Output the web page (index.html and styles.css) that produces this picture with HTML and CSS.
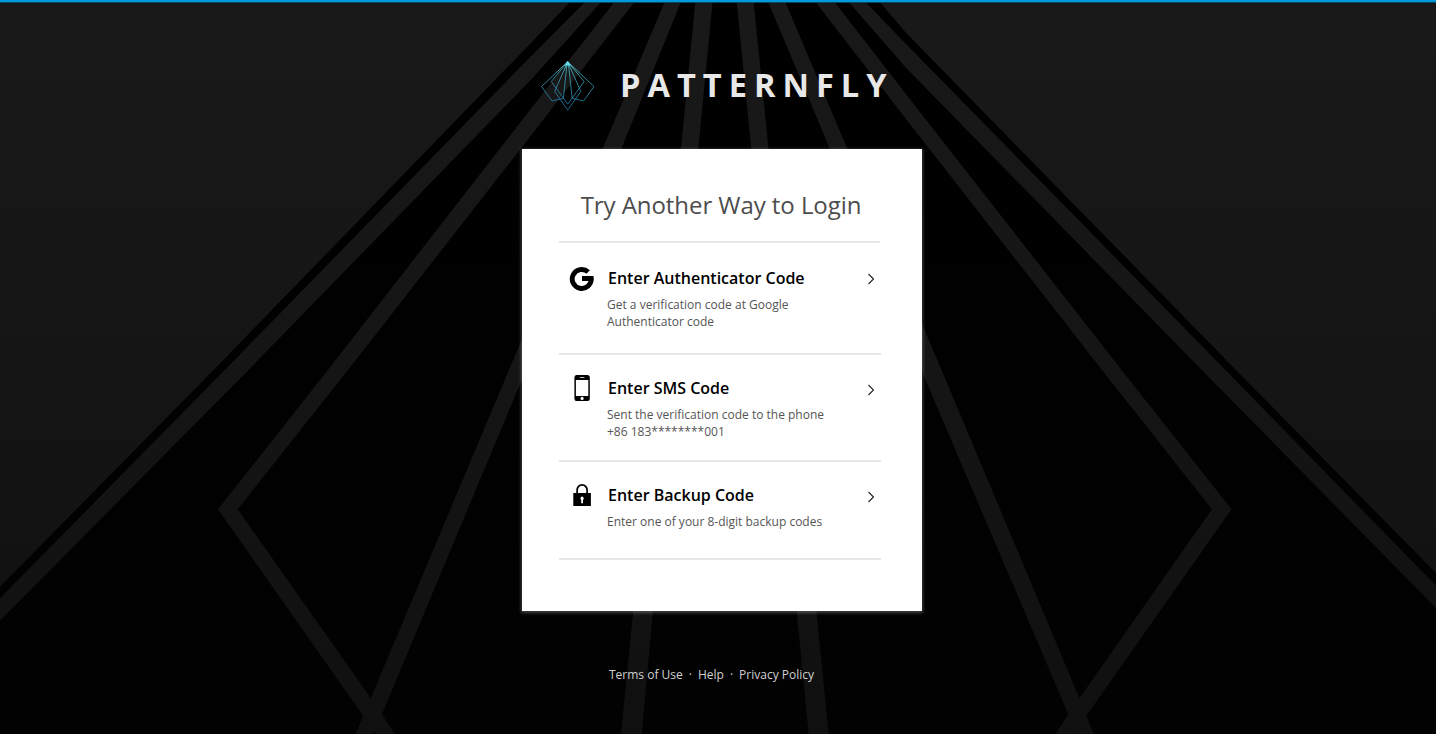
FILE: index.html
```html
<!DOCTYPE html>
<html lang="en">
<head>
<meta charset="utf-8">
<title>PatternFly Login</title>
<link rel="stylesheet" href="styles.css">
</head>
<body>
<svg class="backdrop" viewBox="0 0 1436 734" preserveAspectRatio="none" aria-hidden="true">
  <defs>
    <linearGradient id="shade" gradientUnits="userSpaceOnUse" x1="0" y1="0" x2="0" y2="734">
      <stop offset="0" stop-color="#191919"/>
      <stop offset=".5" stop-color="#151515"/>
      <stop offset="1" stop-color="#101010"/>
    </linearGradient>
    <linearGradient id="dark" gradientUnits="userSpaceOnUse" x1="0" y1="0" x2="0" y2="734">
      <stop offset="0" stop-color="#000"/>
      <stop offset="1" stop-color="#020202"/>
    </linearGradient>
  </defs>
  <rect width="1436" height="734" fill="url(#shade)"/>
  <path fill="url(#dark)" d="M572 0 530 44 213.6 370 0 586.7V734H1436V573L1236 370 906 32.7 878 0Z"/>
  <g fill="url(#shade)">
    <path d="M587 0 530 57.3 224.8 370 0 598.3V620.7L248.4 370 530 80.7 603 0Z"/>
    <path d="M616 0 530 110 327.9 370 218 509.3 362.7 715 376 734H395L370.8 698.3 237.6 509.3 348 370 530 136.7 636 0Z"/>
    <path d="M665.5 0 602.6 149 511.5 364 370.8 698.3 355.6 734H373.5L382 714 520 384 621.2 149 681.7 0Z"/>
    <path d="M695.5 0 681 149 633.3 611 621 734H641.7L653 611 698.3 149 712.7 0Z"/>
    <path d="M736.5 0 751.3 149 796.7 611 808.7 734H828.7L816.3 611 768.5 149 753.4 0Z"/>
    <path d="M767.3 0 830 149 923 374 1068.3 714 1076 734H1093.6L1079.4 698.3 939 364 847.4 149 784.5 0Z"/>
    <path d="M814 0 906 119 1102 370 1212 509.3 1079.4 698.3 1055.4 734H1075L1087.5 714 1231.5 509.3 1121.6 370 906 94.3 833 0Z"/>
    <path d="M847 0 906 67.7 1201.8 370 1436 608V585.7L1225.4 370 906 44 863.5 0Z"/>
  </g>
</svg>
<div class="page">
  <div class="topbar"></div>
  <header class="brand">
    <svg class="brand-mark" width="56" height="52" viewBox="540 60 56 52" aria-hidden="true">
      <defs>
        <linearGradient id="mark" gradientUnits="userSpaceOnUse" x1="0" y1="61" x2="0" y2="110">
          <stop offset="0" stop-color="#55c4d2"/>
          <stop offset=".4" stop-color="#388fa4"/>
          <stop offset="1" stop-color="#176a98"/>
        </linearGradient>
      </defs>
      <g class="mark-lines" stroke="url(#mark)">
        <path d="M567.7 61.8 541.5 86.5 552 101 563.4 98.3 567.2 61.8M567.7 61.8 594 86.5 583.6 101 572.2 98.3 568.2 61.8"/>
        <path d="M567.7 61.8 551.3 81.5 567.7 104.2 584.2 81.5Z"/>
        <path d="M567.7 61.8 554.7 91.5 567.7 110 580.8 91.5Z"/>
      </g>
      <path fill="#62dbe6" d="M567.7 61 571 65.5H564.4Z"/>
    </svg>
    <span class="brand-name">PATTERNFLY</span>
  </header>
  <main class="card">
    <h1 class="card-title">Try Another Way to Login</h1>
    <ul class="options">
      <li class="option option-auth">
        <svg class="option-icon" width="26" height="26" viewBox="0 0 26 26" aria-hidden="true">
          <path fill="none" stroke="#000" stroke-width="4.9" d="M19.2 6A9.5 9.5 0 1 0 22.2 12.3"/>
          <path d="M13 10.1H24.5Q24.9 12.6 24.1 15H13Z"/>
        </svg>
        <div class="option-body">
          <h2 class="option-title">Enter Authenticator Code</h2>
          <p class="option-text">Get a verification code at Google<br>Authenticator code</p>
        </div>
        <svg class="chevron" width="8" height="12" viewBox="0 0 8 12" aria-hidden="true"><path d="M1.5 1 6.5 6 1.5 11"/></svg>
      </li>
      <li class="option option-sms">
        <svg class="option-icon" width="26" height="26" viewBox="0 0 26 26" aria-hidden="true">
          <path fill-rule="evenodd" d="M7.5 0H18.3Q20.8 0 20.8 2.5V23.5Q20.8 26 18.3 26H7.5Q5.4 26 5.4 23.5V2.5Q5.4 0 7.5 0ZM6.9 5V21H19.3V5ZM10.8 1.9V2.7H15.4V1.9ZM13.1 21.8A1.6 1.6 0 1 0 13.1 25 1.6 1.6 0 1 0 13.1 21.8Z"/>
        </svg>
        <div class="option-body">
          <h2 class="option-title">Enter SMS Code</h2>
          <p class="option-text">Sent the verification code to the phone<br>+86 183********001</p>
        </div>
        <svg class="chevron" width="8" height="12" viewBox="0 0 8 12" aria-hidden="true"><path d="M1.5 1 6.5 6 1.5 11"/></svg>
      </li>
      <li class="option option-backup">
        <svg class="option-icon" width="26" height="26" viewBox="0 0 26 26" aria-hidden="true">
          <path fill="none" stroke="#000" stroke-width="1.7" d="M8.1 12V7.2A5 5.4 0 0 1 18.1 7.2V12"/>
          <path fill-rule="evenodd" d="M4.3 10H21.9V22.9H4.3ZM13.1 13.6A1.9 1.9 0 0 0 12.2 17V20.2H14V17A1.9 1.9 0 0 0 13.1 13.6Z"/>
        </svg>
        <div class="option-body">
          <h2 class="option-title">Enter Backup Code</h2>
          <p class="option-text">Enter one of your 8-digit backup codes</p>
        </div>
        <svg class="chevron" width="8" height="12" viewBox="0 0 8 12" aria-hidden="true"><path d="M1.5 1 6.5 6 1.5 11"/></svg>
      </li>
    </ul>
  </main>
  <footer class="links"><span>Terms of Use</span><span class="dot">·</span><span>Help</span><span class="dot">·</span><span>Privacy Policy</span></footer>
</div>
</body>
</html>
```
FILE: styles.css
```css
* { box-sizing: border-box; }
body {
  margin: 0;
  background: #000;
  font-family: "Open Sans", "Noto Sans", sans-serif;
}
.backdrop {
  position: absolute;
  inset: 0;
  width: 100%;
  height: 100%;
}
.page {
  position: relative;
  height: 734px;
  overflow: hidden;
}
.topbar {
  height: 3px;
  background: #0099dc;
  border-bottom: 1px solid #0b4661;
}
.brand {
  display: flex;
  align-items: flex-start;
  height: 52px;
  margin: 57px 0 0 540px;
}
.brand-mark { flex: none; }
.brand-name {
  margin-left: 24px;
  font-size: 32.6px;
  font-weight: 700;
  line-height: 50px;
  letter-spacing: 7px;
  color: #e8e8e8;
}
.mark-lines {
  fill: none;
  stroke-width: .9;
}
.card {
  width: 400px;
  height: 462px;
  margin: 37px 0 0 522px;
  padding: 36px 41px 0 37px;
  background: #fff;
  box-shadow: 0 1px 3px 1px rgba(255, 255, 255, .25);
}
.card-title {
  margin: 0;
  height: 56px;
  padding-left: 2px;
  font-size: 24px;
  font-weight: 400;
  line-height: 40px;
  letter-spacing: -.06px;
  text-align: center;
  color: #4d4d4d;
  white-space: nowrap;
}
.options {
  width: 321px;
  margin: 0;
  padding: 0;
  list-style: none;
  border-top: 2px solid #e7e7e7;
}
.option {
  display: flex;
  align-items: flex-start;
  width: 322px;
  padding-left: 10px;
  border-bottom: 2px solid #e7e7e7;
}
.option-auth { height: 112px; padding-top: 23px; }
.option-sms { height: 107px; padding-top: 20px; }
.option-backup { height: 98px; padding-top: 21px; }
.option-sms .option-body { padding-top: 1px; }
.option-icon { flex: none; }
.option-body {
  flex: none;
  width: 273px;
  padding-left: 12px;
}
.option-title {
  margin: 0 0 0 1px;
  font-size: 16px;
  font-weight: 600;
  line-height: 24px;
  color: #000;
}
.option-text {
  margin: 6px 0 0;
  font-size: 12px;
  line-height: 17px;
  color: #555;
}
.chevron {
  flex: none;
  margin: 8px 0 0 -1px;
  fill: none;
  stroke: #222;
  stroke-width: 1.1;
}
.option-auth .chevron { margin-top: 7px; }
.option-sms .chevron { margin-top: 9px; }
.links {
  display: flex;
  margin: 55px 0 0 609px;
  font-size: 12px;
  line-height: 17px;
  color: #d0d0d0;
}
.dot { margin: 0 6px; }
```
